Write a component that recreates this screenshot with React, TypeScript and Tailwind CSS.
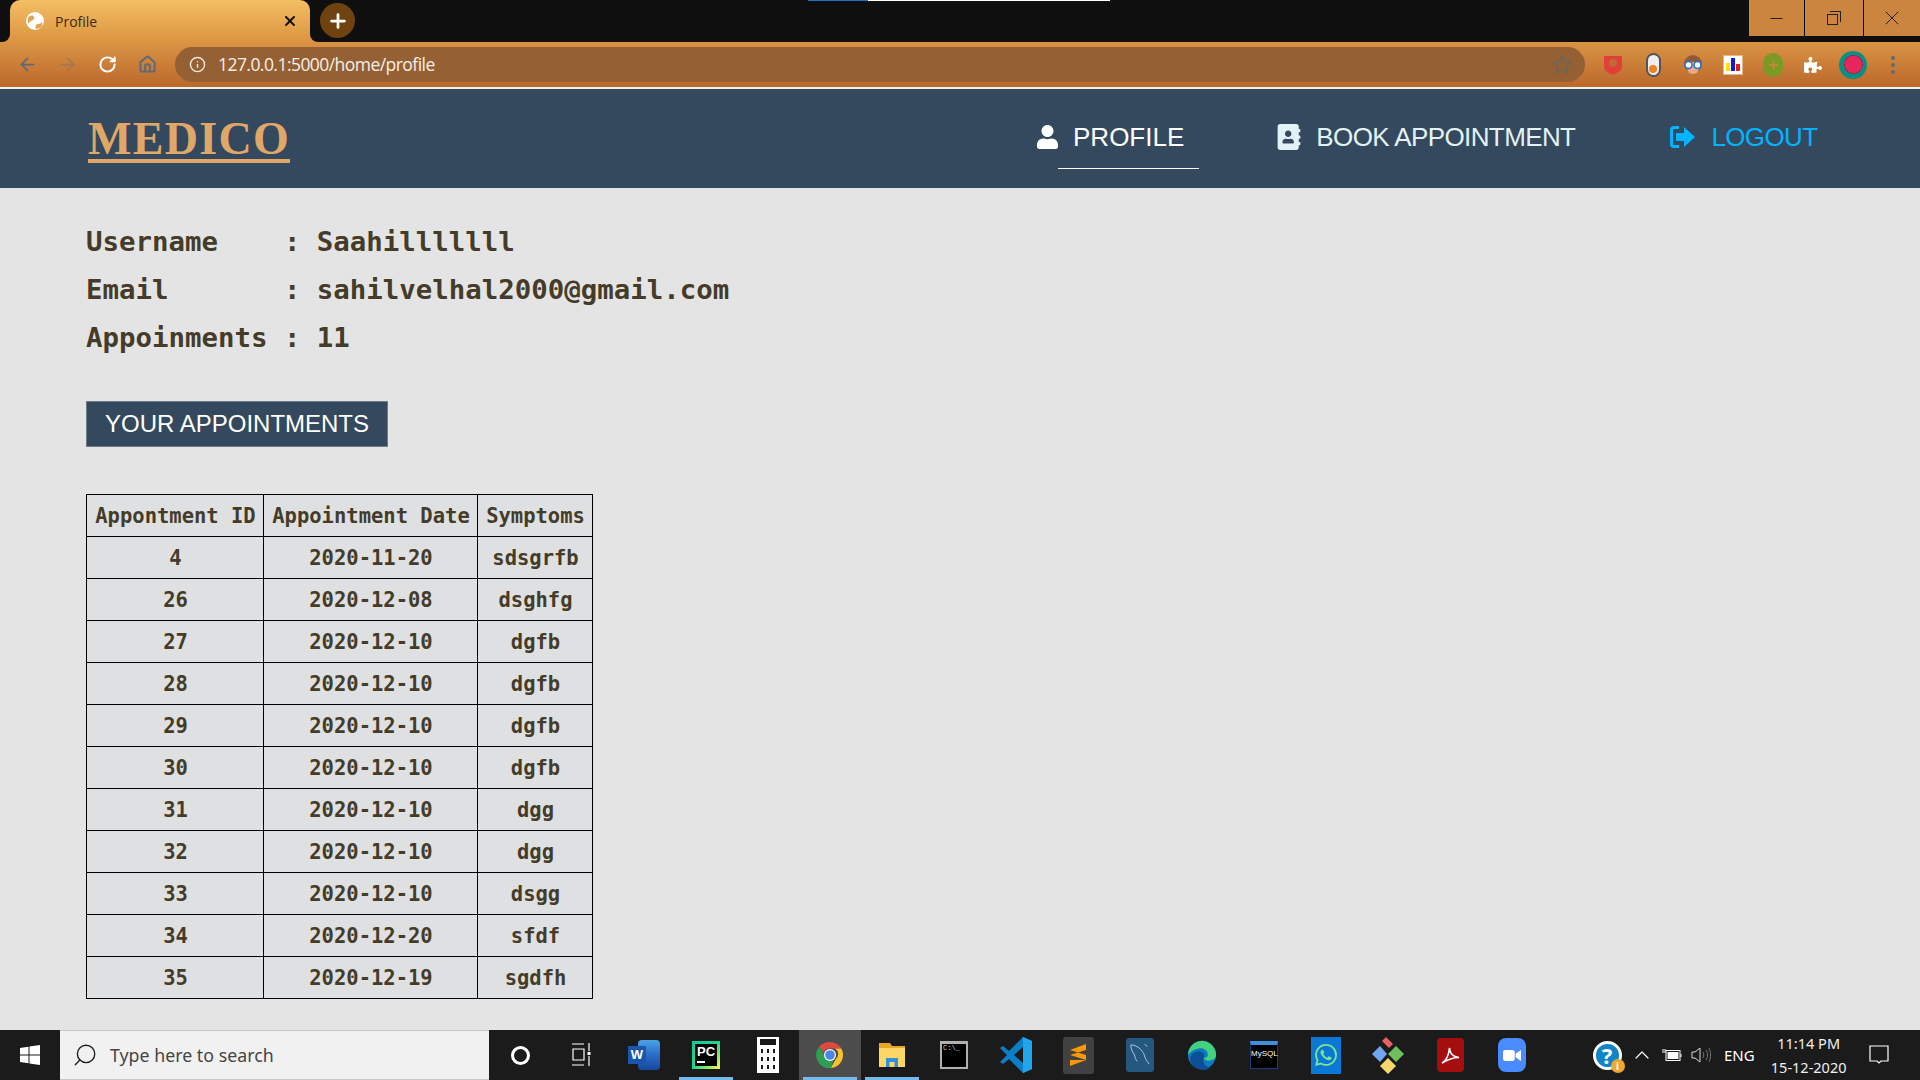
import React from "react";
import { FaUser, FaAddressBook, FaPuzzlePiece } from "react-icons/fa";
import { FaXmark } from "react-icons/fa6";
import { SiWhatsapp } from "react-icons/si";
import { LuArrowLeft, LuArrowRight, LuRotateCw, LuHouse, LuInfo, LuStar, LuChevronUp, LuSearch, LuPlus, LuMinus, LuX } from "react-icons/lu";

const rows = [
  ["4", "2020-11-20", "sdsgrfb"],
  ["26", "2020-12-08", "dsghfg"],
  ["27", "2020-12-10", "dgfb"],
  ["28", "2020-12-10", "dgfb"],
  ["29", "2020-12-10", "dgfb"],
  ["30", "2020-12-10", "dgfb"],
  ["31", "2020-12-10", "dgg"],
  ["32", "2020-12-10", "dgg"],
  ["33", "2020-12-10", "dsgg"],
  ["34", "2020-12-20", "sfdf"],
  ["35", "2020-12-19", "sgdfh"],
];

function ChromeIcon() {
  return (
    <svg viewBox="0 0 28 28" className="w-[28px] h-[28px]">
      <path d="M14 1a13 13 0 0 1 11.3 6.5H14a6.5 6.5 0 0 0-6.2 4.4L3.4 5.6A13 13 0 0 1 14 1z" fill="#dd4b3e" />
      <path d="M25.3 7.5A13 13 0 0 1 14.8 27l5-9a6.5 6.5 0 0 0-.8-10.5z" fill="#fbc02d" />
      <path d="M3.4 5.6l5.3 9.2a6.5 6.5 0 0 0 8.9 4.5L14.8 27A13 13 0 0 1 3.4 5.6z" fill="#2f9e54" />
      <circle cx="14" cy="14" r="6" fill="#fff" />
      <circle cx="14" cy="14" r="4.8" fill="#4a86e8" />
    </svg>
  );
}

const taskIcons: { key: string; node: React.ReactNode; bar?: boolean; active?: boolean }[] = [
  { key: "cortana", node: <span className="block w-[19px] h-[19px] rounded-full border-[3px] border-white" /> },
  {
    key: "taskview",
    node: (
      <svg viewBox="0 0 20 24" className="w-[20px] h-[24px]" fill="none" stroke="#fff" strokeWidth="1.2">
        <path d="M0 1h12M1 6h11v11H1zM0 22h12M17 0v8M17 13v10" />
        <rect x="15.5" y="9" width="3" height="3" fill="#fff" stroke="none" />
      </svg>
    ),
  },
  {
    key: "word",
    node: (
      <div className="relative w-[32px] h-[30px]">
        <div className="absolute right-0 top-0 w-[22px] h-full rounded-sm bg-[linear-gradient(#4aa3ea,#2b6cc4_50%,#174a9e)]" />
        <div className="absolute left-0 top-[6px] w-[18px] h-[18px] bg-[#1a56ac] text-white text-[13px] font-bold leading-[18px] text-center font-['Liberation_Sans',sans-serif]">W</div>
      </div>
    ),
  },
  {
    key: "pycharm",
    bar: true,
    node: (
      <div className="w-[28px] h-[28px] p-[3px] bg-[linear-gradient(135deg,#16c79a,#21d789_50%,#fcf84a)]">
        <div className="w-full h-full bg-black text-white text-[13px] font-bold leading-[15px] pl-[2px] font-['Liberation_Sans',sans-serif]">
          PC
          <div className="w-[8px] h-[2px] bg-white mt-[2px]" />
        </div>
      </div>
    ),
  },
  {
    key: "calc",
    node: (
      <div className="w-[22px] h-[36px] bg-white p-[2px] flex flex-col gap-[4px]">
        <div className="h-[6px] bg-[#1a1a1a] mx-[1px]" />
        <div className="grid grid-cols-3 gap-[4px] px-[2px]">
          {Array.from({ length: 9 }).map((_, i) => (
            <span key={i} className="h-[4px] bg-[#1a1a1a]" />
          ))}
        </div>
      </div>
    ),
  },
  { key: "chrome", bar: true, active: true, node: <ChromeIcon /> },
  {
    key: "files",
    bar: true,
    node: (
      <svg viewBox="0 0 28 28" className="w-[28px] h-[28px]">
        <path d="M1 2h11l2 3h13v21H1z" fill="#e8a825" />
        <path d="M1 7h26v19H1z" fill="#ffd767" />
        <path d="M8 26v-9h12v9h-3.500v-5h-5v5z" fill="#2f8fe0" />
      </svg>
    ),
  },
  {
    key: "terminal",
    node: (
      <div className="w-[28px] h-[28px] bg-black border-2 border-[#b0b0b0] border-t-[3px] text-[7px] leading-[9px] text-[#cfcfcf] pl-[1px] font-['Liberation_Mono',monospace]">
        C:\_
      </div>
    ),
  },
  {
    key: "vscode",
    node: (
      <svg viewBox="0 0 32 36" className="w-[32px] h-[36px]">
        <path d="M23 0l9 4v28l-9 4L9 22l-6 5-3-2 7-7-7-7 3-2 6 5z" fill="#0d7fc9" />
        <path d="M23 0l9 4v28l-9 4z" fill="#23a5ee" />
        <path d="M23 10v16l-9-8z" fill="#1a1a1a" />
      </svg>
    ),
  },
  {
    key: "sublime",
    node: (
      <div className="w-[31px] h-[37px] rounded-[3px] bg-[#414141] flex items-center justify-center">
        <svg viewBox="0 0 16 22" className="w-[16px] h-[22px]">
          <path d="M16 0v6L0 11V6zM0 11l16 5v-5L0 6zM16 16L0 22v-6z" fill="#ff9800" />
        </svg>
      </div>
    ),
  },
  {
    key: "mysql",
    node: (
      <div className="w-[28px] h-[34px] rounded-[3px] bg-[#25587f] flex items-center justify-center">
        <svg viewBox="0 0 24 28" className="w-[22px] h-[28px]" fill="none" stroke="#b8cddd" strokeWidth="1">
          <path d="M2 3c6 0 13 5 15 12 1 4 3 6 5 9M2 3c0 5 2 8 4 11 1 3 1 5 3 7M17 2l3 3" />
        </svg>
      </div>
    ),
  },
  {
    key: "edge",
    node: (
      <svg viewBox="0 0 32 36" className="w-[30px] h-[36px]">
        <circle cx="16" cy="18" r="15" fill="#0f7ac4" />
        <path d="M1 18C2 6 12 2 18 3c8 1 13 8 13 15 0 4-4 6-8 6-3 0-5-1-5-3 3 0 5-2 4-5-1-4-6-6-10-5-5 1-9 4-11 7z" fill="#42d17d" />
        <path d="M18 21c-2 4 1 10 7 10-3 3-8 4-13 2C6 31 2 25 4 19c3-5 9-6 12-4 2 1 3 3 2 6z" fill="#0c4f95" />
      </svg>
    ),
  },
  {
    key: "mysqlcli",
    node: (
      <div className="w-[28px] h-[28px] bg-black border border-[#1d3d78] border-t-[4px] border-t-[#3f8fe0] text-white text-[8px] leading-[18px] text-center font-['Liberation_Sans',sans-serif]">
        MySQL
      </div>
    ),
  },
  {
    key: "whatsapp",
    node: (
      <div className="w-[30px] h-[37px] bg-[#0a78d4] flex items-center justify-center">
        <SiWhatsapp className="w-[22px] h-[22px] text-[#7be495]" />
      </div>
    ),
  },
  {
    key: "git",
    node: (
      <svg viewBox="0 0 32 38" className="w-[32px] h-[38px]">
        <path d="M10 5l4-4 7 7-4 4z" fill="#e8605f" />
        <path d="M8 10l7 8-7 8-8-8z" fill="#6fa7f2" />
        <path d="M24 10l8 8-8 8-8-8z" fill="#6fbf5c" />
        <path d="M16 22l8 8-8 8-8-8z" fill="#f5d86a" />
      </svg>
    ),
  },
  {
    key: "acrobat",
    node: (
      <div className="w-[27px] h-[34px] rounded-[4px] bg-[#a50e0e] flex items-center justify-center">
        <svg viewBox="0 0 20 20" className="w-[19px] h-[19px]" fill="none" stroke="#fff" strokeWidth="1.6">
          <path d="M1 18c4-2 7-8 8-16 0 5 3 9 10 10-6 0-12 2-18 6z" />
        </svg>
      </div>
    ),
  },
  {
    key: "zoom",
    node: (
      <div className="w-[28px] h-[34px] rounded-[8px] bg-[#4a8cff] flex items-center justify-center">
        <svg viewBox="0 0 20 14" className="w-[18px] h-[13px]" fill="#fff">
          <rect x="0" y="1" width="13" height="12" rx="2.5" />
          <path d="M14 5l6-4v12l-6-4z" />
        </svg>
      </div>
    ),
  },
];

export default function App() {
  return (
    <div className="relative h-[1080px] w-[1920px] overflow-hidden flex flex-col bg-[#e4e4e4] font-['Liberation_Sans',sans-serif]">
      {/* window title strip */}
      <div className="relative h-[42px] shrink-0 bg-[#0f0f0f] flex">
        <div className="absolute left-[808px] top-0 h-[1px] w-[60px] bg-[#1a73c8]" />
        <div className="absolute left-[868px] top-0 h-[1px] w-[242px] bg-white" />
        <div className="relative ml-[10px] w-[300px] h-[42px] rounded-t-[10px] bg-[linear-gradient(#f4be63,#dc9441)] flex items-center pl-[16px] pr-[12px]">
          <span className="absolute -left-[8px] bottom-0 w-[8px] h-[8px] bg-[#dc9441]">
            <span className="block w-full h-full bg-[#0f0f0f] rounded-br-[8px]" />
          </span>
          <span className="absolute -right-[8px] bottom-0 w-[8px] h-[8px] bg-[#dc9441]">
            <span className="block w-full h-full bg-[#0f0f0f] rounded-bl-[8px]" />
          </span>
          <svg viewBox="0 0 18 18" className="w-[18px] h-[18px] shrink-0">
            <circle cx="9" cy="9" r="9" fill="#fff" />
            <path d="M2 6c2-3 5-3 6-1s-1 3-3 4-2 3-3 2zM10 17c-1-3 0-5 2-5s3-1 4-2c1 3 0 5-2 6z" fill="#e0a555" />
          </svg>
          <span className="ml-[11px] text-[14px] text-[#3a2a12] font-['Open_Sans',sans-serif]">Profile</span>
          <FaXmark className="ml-auto w-[16px] h-[16px] text-[#161008]" />
        </div>
        <div className="ml-[10px] mt-[3px] w-[35px] h-[35px] rounded-full bg-[#6e4310] flex items-center justify-center">
          <LuPlus className="w-[22px] h-[22px] text-white" strokeWidth={3} />
        </div>
        <div className="ml-auto h-[36px] flex">
          <div className="w-[56px] bg-[#cb853f] border-r border-black flex items-center justify-center">
            <LuMinus className="w-[19px] h-[19px] text-[#222]" strokeWidth={1.5} />
          </div>
          <div className="w-[59px] bg-[#cb853f] border-r border-black flex items-center justify-center">
            <span className="relative block w-[11px] h-[11px] border border-[#222] mr-[3px] mt-[2px]">
              <span className="absolute left-[2px] top-[-4px] w-[11px] h-[11px] border-t border-r border-[#222]" />
            </span>
          </div>
          <div className="w-[56px] bg-[#cb853f] flex items-center justify-center">
            <LuX className="w-[24px] h-[24px] text-[#222]" strokeWidth={1} />
          </div>
        </div>
      </div>

      {/* browser toolbar */}
      <div className="h-[45px] shrink-0 bg-[linear-gradient(#da9444,#bb682b)] flex items-center pl-[17px]">
        <LuArrowLeft className="w-[21px] h-[21px] text-[#5f6a78]" />
        <LuArrowRight className="ml-[19px] w-[21px] h-[21px] text-[#a27850]" />
        <LuRotateCw className="ml-[20px] w-[19px] h-[19px] text-white" strokeWidth={2.5} />
        <LuHouse className="ml-[21px] w-[19px] h-[19px] text-[#5f6a78]" strokeWidth={2.5} />
        <div className="ml-[18px] h-[35px] w-[1410px] rounded-full bg-[#956034] flex items-center pl-[14px] pr-[13px]">
          <LuInfo className="w-[17px] h-[17px] text-[#f0e6da]" />
          <span className="ml-[12px] text-[17.5px] text-[#f7efe6] font-['Open_Sans',sans-serif] tracking-[-0.55px]">127.0.0.1:5000/home/profile</span>
          <LuStar className="ml-auto w-[20px] h-[20px] text-[#6b6558]" />
        </div>
        <div className="flex items-center ml-[8px]">
          <span className="w-[40px] flex justify-center">
            <svg viewBox="0 0 18 20" className="w-[18px] h-[20px]">
              <path d="M0 1h18v11c0 4-5 6-9 8-4-2-9-4-9-8z" fill="#e0403a" />
              <circle cx="9" cy="8" r="4" fill="#c26a33" />
            </svg>
          </span>
          <span className="w-[40px] flex justify-center">
            <span className="relative block w-[15px] h-[24px] rounded-full bg-[#eeeeee] border-2 border-[#555]">
              <span className="absolute left-[1.5px] bottom-[2px] w-[8px] h-[8px] rounded-full bg-[#f07f24]" />
            </span>
          </span>
          <span className="w-[40px] flex justify-center">
            <svg viewBox="0 0 20 24" className="w-[20px] h-[24px]">
              <circle cx="10" cy="11" r="9" fill="#8f5a38" />
              <circle cx="10" cy="15" r="6" fill="#eca98a" />
              <circle cx="5.5" cy="12" r="3.5" fill="#fff" stroke="#1e6fd9" strokeWidth="1.5" />
              <circle cx="14.5" cy="12" r="3.5" fill="#fff" stroke="#1e6fd9" strokeWidth="1.5" />
            </svg>
          </span>
          <span className="w-[40px] flex justify-center">
            <span className="w-[20px] h-[20px] bg-white border border-[#e8b58a] flex items-end justify-center gap-[1px] pb-[3px]">
              <span className="w-[4px] h-[8px] bg-[#ffe000]" />
              <span className="w-[4px] h-[13px] bg-[#1418d8]" />
              <span className="w-[4px] h-[7px] bg-[#e02020]" />
            </span>
          </span>
          <span className="w-[40px] flex justify-center">
            <span className="w-[20px] h-[24px] rounded-full bg-[#7a9a24] flex items-center justify-center text-[#c2873a] text-[18px] font-bold leading-none">+</span>
          </span>
          <span className="w-[40px] flex justify-center">
            <FaPuzzlePiece className="w-[18px] h-[18px] text-white" />
          </span>
          <span className="w-[40px] flex justify-center">
            <span className="w-[28px] h-[28px] rounded-full bg-[#0b8f85] flex items-center justify-center">
              <span className="w-[19px] h-[19px] rounded-full bg-[#e8265e] border border-dotted border-[#7a1030]" />
            </span>
          </span>
          <span className="w-[40px] flex flex-col items-center gap-[3px]">
            <span className="w-[4px] h-[4px] rounded-full bg-[#5f6a78]" />
            <span className="w-[4px] h-[4px] rounded-full bg-[#5f6a78]" />
            <span className="w-[4px] h-[4px] rounded-full bg-[#5f6a78]" />
          </span>
        </div>
      </div>
      <div className="h-[2px] shrink-0 bg-[#f2efe9]" />

      {/* site navbar */}
      <nav className="h-[100px] shrink-0 bg-[#34495e] flex items-start pl-[88px] border-b border-[#e4e4e4]">
        <a className="mt-[22px] text-[46px] leading-[56px] font-bold tracking-[1.3px] text-[#e0a868] underline decoration-[4px] underline-offset-[5px] font-['Liberation_Serif',serif]">MEDICO</a>
        <div className="ml-[747px] flex items-start">
          <div className="relative h-[80px] flex items-center pt-[40px] pb-[24px]">
            <FaUser className="w-[21px] h-[24px] text-white" />
            <span className="ml-[15px] text-[26px] text-white">PROFILE</span>
            <span className="absolute left-[21px] w-[141px] bottom-0 h-[1px] bg-white" />
          </div>
          <div className="ml-[93px] h-[80px] flex items-center pt-[40px] pb-[24px]">
            <FaAddressBook className="w-[24px] h-[26px] text-[#e3f2f6]" />
            <span className="ml-[15px] text-[26px] text-[#e3f2f6] tracking-[-0.6px]">BOOK APPOINTMENT</span>
          </div>
          <div className="ml-[94px] h-[80px] flex items-center pt-[40px] pb-[24px]">
            <svg viewBox="0 0 26 24" className="w-[26px] h-[24px]" fill="#00b4ff">
              <path d="M10 1H5a4 4 0 0 0-4 4v14a4 4 0 0 0 4 4h5v-3H5a1 1 0 0 1-1-1V5a1 1 0 0 1 1-1h5z" />
              <path d="M7 8h8V2l11 10-11 10v-6H7z" />
            </svg>
            <span className="ml-[16px] text-[26px] text-[#00b4ff] tracking-[-0.6px]">LOGOUT</span>
          </div>
        </div>
      </nav>

      {/* profile content */}
      <main className="flex-1 pl-[86px] pt-[29px] text-[#443c28] font-['DejaVu_Sans_Mono','Liberation_Mono',monospace]">
        <div className="text-[27.4px] leading-[48px] font-bold whitespace-pre">
          <div>Username    : Saahilllllll</div>
          <div>Email       : sahilvelhal2000@gmail.com</div>
          <div>Appoinments : 11</div>
        </div>
        <div className="mt-[39px] w-[302px] h-[46px] border border-[#6f7b87] bg-[#34495e] flex items-center pl-[18px] text-[24px] text-white font-['Liberation_Sans',sans-serif]">
          YOUR APPOINTMENTS
        </div>
        <table className="mt-[47px] border-collapse bg-[#dfe0e2] text-[20.5px] font-bold text-center">
          <thead>
            <tr className="h-[42px]">
              <th className="w-[177px] border border-black font-bold whitespace-pre pt-[2px] pl-[1px]">Appontment ID</th>
              <th className="w-[214px] border border-black font-bold whitespace-pre pt-[2px] pl-[1px]">Appointment Date</th>
              <th className="w-[115px] border border-black font-bold pt-[2px] pl-[1px]">Symptoms</th>
            </tr>
          </thead>
          <tbody>
            {rows.map((r) => (
              <tr key={r[0]} className="h-[42px]">
                <td className="border border-black pt-[2px] pl-[1px]">{r[0]}</td>
                <td className="border border-black pt-[2px] pl-[1px]">{r[1]}</td>
                <td className="border border-black pt-[2px] pl-[1px]">{r[2]}</td>
              </tr>
            ))}
          </tbody>
        </table>
      </main>

      {/* windows taskbar */}
      <footer className="h-[50px] shrink-0 bg-[#1b1b1b] flex items-stretch text-white font-['Noto_Sans',sans-serif]">
        <div className="w-[60px] flex items-center justify-center">
          <svg viewBox="0 0 20 20" className="w-[20px] h-[24px]" fill="#fff">
            <path d="M0 3l8.5-1.300V9.500H0zM9.500 1.500L20 0v9.500H9.500zM0 10.500h8.500v7.800L0 17zM9.500 10.500H20V20L9.500 18.500z" />
          </svg>
        </div>
        <div className="w-[429px] bg-[#f1f1f1] border-y border-[#c8c8c8] flex items-center pl-[12px]">
          <LuSearch className="w-[26px] h-[26px] text-[#222] -scale-x-100" strokeWidth={1.3} />
          <span className="ml-[12px] text-[17.8px] text-[#444]">Type here to search</span>
        </div>
        {taskIcons.map((t) => (
          <div
            key={t.key}
            className={
              "relative w-[62px] shrink-0 flex items-center justify-center " +
              (t.active ? "bg-[#4c4c4c]" : "")
            }
          >
            {t.node}
            {t.bar && <span className="absolute left-[4px] right-[4px] bottom-0 h-[3px] bg-[#76b9ed]" />}
          </div>
        ))}
        <div className="ml-[48px] w-[32px] flex items-center justify-center">
          <div className="relative w-[29px] h-[29px] rounded-full bg-[#0f84c8] border-[3px] border-white flex items-center justify-center text-white text-[22px] font-bold leading-none">
            ?
            <span className="absolute -right-[6px] -bottom-[6px] w-[14px] h-[14px] rounded-full bg-[#f0a830] text-white text-[10px] leading-[14px] text-center">i</span>
          </div>
        </div>
        <div className="ml-[7px] flex items-center">
          <LuChevronUp className="w-[24px] h-[24px] text-white" strokeWidth={1.2} />
        </div>
        <div className="ml-[8px] flex items-center">
          <svg viewBox="0 0 20 14" className="w-[20px] h-[14px]" fill="none" stroke="#fff">
            <rect x="4" y="2.5" width="14" height="10" />
            <rect x="5.5" y="4" width="11" height="7" fill="#fff" stroke="none" />
            <path d="M19 6v3M1 1v4M3 1v4" />
          </svg>
        </div>
        <div className="ml-[9px] flex items-center">
          <svg viewBox="0 0 20 18" className="w-[20px] h-[18px]" fill="none" stroke="#d8d8d8">
            <path d="M1 6h3l5-4v14l-5-4H1z" />
            <path d="M12 6c1 2 1 4 0 6M15 4c2 3 2 7 0 10M18 2c2 4 2 10 0 14" stroke="#777" />
          </svg>
        </div>
        <div className="ml-[13px] flex items-center text-[15px]">ENG</div>
        <div className="ml-[14px] w-[80px] flex flex-col items-center justify-center text-[14.5px] leading-[24px] text-[#f0f0f0]">
          <span>11:14 PM</span>
          <span>15-12-2020</span>
        </div>
        <div className="ml-[20px] flex items-center">
          <svg viewBox="0 0 20 20" className="w-[20px] h-[22px]" fill="none" stroke="#fff" strokeWidth="1.2">
            <path d="M1 1h18v15h-7l-2 2-2-2H1z" />
          </svg>
        </div>
      </footer>
    </div>
  );
}
